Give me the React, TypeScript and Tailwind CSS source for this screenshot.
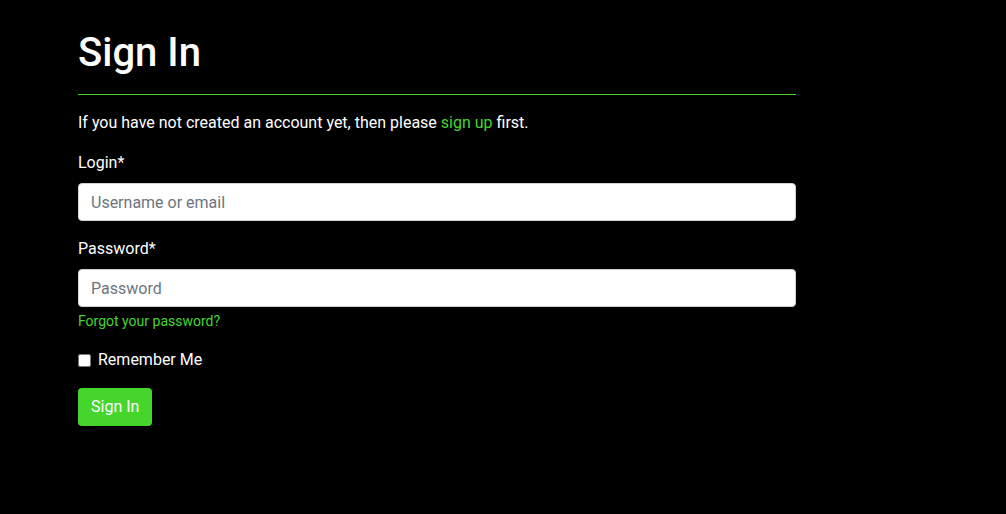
import { useState } from "react";

export default function App() {
  const [remember, setRemember] = useState(false);

  return (
    <div className="min-h-[514px] w-full bg-black font-['Roboto',_'Liberation_Sans',_sans-serif] text-white">
      <div className="w-[718px] ml-[78px] pt-[29px]">
        <h1 className="text-[40px] leading-[48px] font-medium">Sign In</h1>
        <div className="mt-[17px] border-t border-[#44d62c]" />

        <p className="mt-4 text-base leading-6">
          If you have not created an account yet, then please{" "}
          <a href="#" className="text-[#44d62c]">sign up</a> first.
        </p>

        <form className="mt-4" onSubmit={(e) => e.preventDefault()}>
          <label htmlFor="login" className="block text-base leading-6">Login*</label>
          <input
            id="login"
            type="text"
            placeholder="Username or email"
            className="mt-2 block h-[38px] w-full rounded border border-[#ced4da] bg-white px-3 text-base text-[#495057] placeholder:text-[#6c757d] outline-none"
          />

          <label htmlFor="password" className="mt-4 block text-base leading-6">Password*</label>
          <input
            id="password"
            type="password"
            placeholder="Password"
            className="mt-2 block h-[38px] w-full rounded border border-[#ced4da] bg-white px-3 text-base text-[#495057] placeholder:text-[#6c757d] outline-none"
          />
          <a href="#" className="mt-1 block text-sm leading-[21px] text-[#44d62c]">Forgot your password?</a>

          <label className="mt-4 flex items-center gap-[7px] text-base leading-6">
            <input
              type="checkbox"
              checked={remember}
              onChange={(e) => setRemember(e.target.checked)}
              className="m-0 h-[13px] w-[13px]"
            />
            Remember Me
          </label>

          <button
            type="submit"
            className="mt-4 h-[38px] rounded border border-transparent bg-[#44d62c] px-3 text-base text-white"
          >
            Sign In
          </button>
        </form>
      </div>
    </div>
  );
}
